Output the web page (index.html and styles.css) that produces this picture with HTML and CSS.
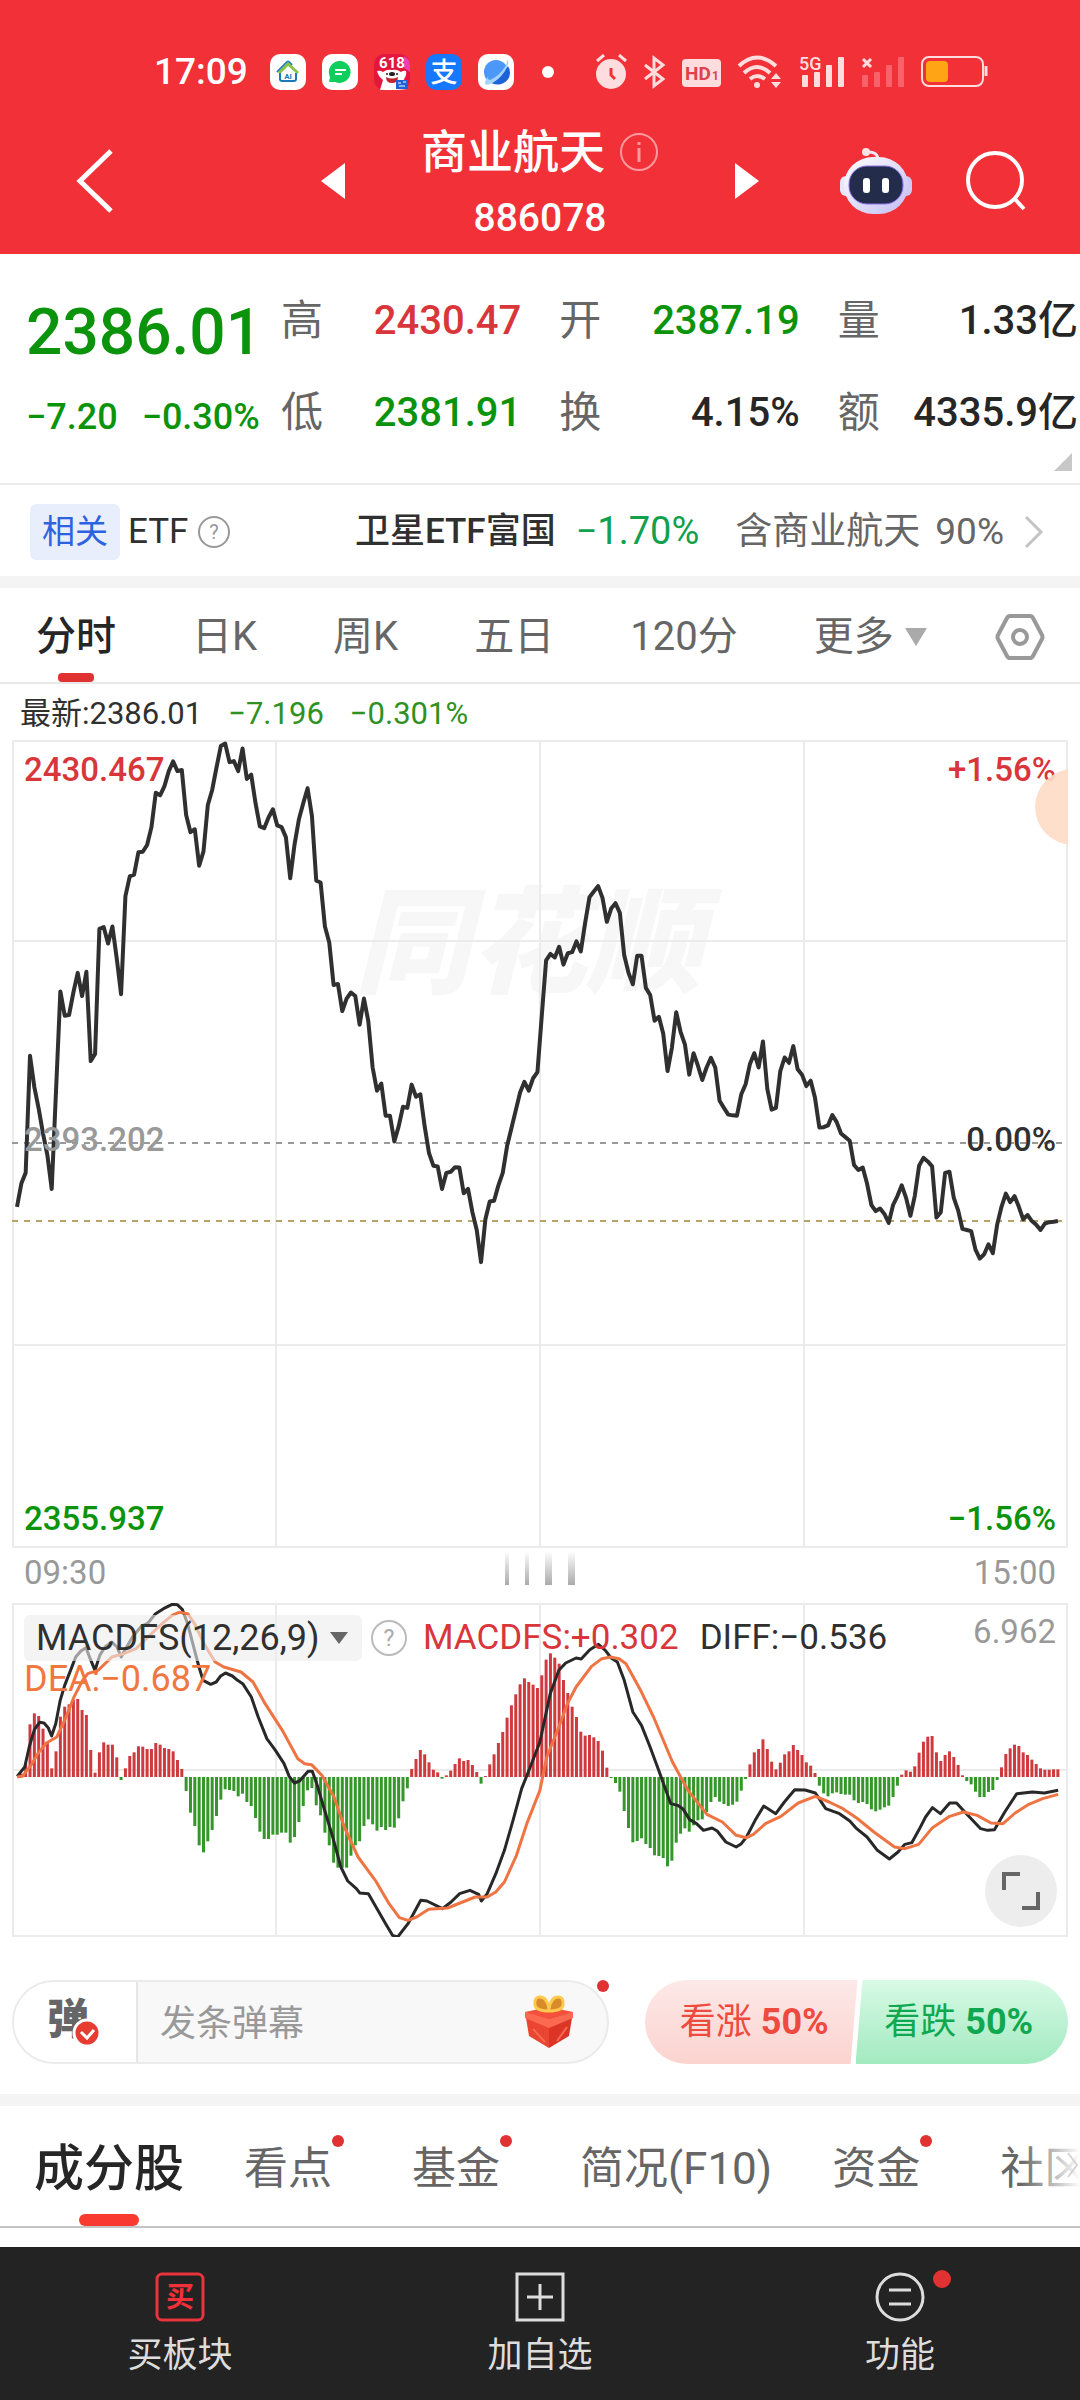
FILE: index.html
```html
<!DOCTYPE html>
<html lang="zh-CN">
<head>
  <meta charset="UTF-8" />
  <meta name="viewport" content="width=device-width, initial-scale=1.0" />
  <title>商业航天 886078</title>
  <link rel="stylesheet" href="styles.css">
</head>
<body>
  <header class="header">
    <div class="status">
      <span class="clock">17:09</span>
      <div class="status-apps">
        <svg width="36" height="36" viewBox="0 0 36 36">
          <rect width="36" height="36" rx="10" fill="#fff"/>
          <path d="M7 18L17 8q1-1 2 0l3 3" fill="none" stroke="#2a7fc0" stroke-width="2"/>
          <path d="M9 19L18 10l10 9" fill="none" stroke="#8bc34a" stroke-width="3"/>
          <path d="M10 19v6q0 2 2 2h12q2 0 2-2v-6" fill="none" stroke="#1a7ab8" stroke-width="2"/>
          <text x="18" y="25" font-size="8" font-weight="700" fill="#1a7ab8" text-anchor="middle">AI</text>
        </svg>
        <svg width="36" height="36" viewBox="0 0 36 36">
          <rect width="36" height="36" rx="10" fill="#fff"/>
          <path d="M18 7a11 11 0 1 1-5 21H7l1-5A11 11 0 0 1 18 7z" fill="#0fce5e"/>
          <path d="M13 16h11M13 20h7" stroke="#fff" stroke-width="2"/>
        </svg>
        <svg width="36" height="36" viewBox="0 0 36 36">
          <rect width="36" height="36" rx="10" fill="#e3173c"/>
          <path d="M30 2q6 3 6 9v7l-6-4z" fill="#f13cb0"/>
          <path d="M3 17q3-1 6 1q4-3 9-2q5-1 9 2q3-2 5-1q1 4-2 8l3 10q-6 1-12 1H6l3-10q-5-4-6-9z" fill="#fff"/>
          <path d="M12 23q6 3 12 0q0 6-6 6t-6-6z" fill="#c0272d"/>
          <circle cx="13" cy="20" r="1" fill="#222"/><circle cx="23" cy="20" r="1" fill="#222"/>
          <ellipse cx="18" cy="20" rx="3" ry="2" fill="#222"/>
          <text x="18" y="14" font-size="15" font-weight="700" fill="#fff" text-anchor="middle">618</text>
          <rect x="22" y="26" width="12" height="9" fill="#1f62d8"/>
          <path d="M24 29h3M29 28h3M25 32h6" stroke="#fff" stroke-width="1"/>
        </svg>
        <svg width="36" height="36" viewBox="0 0 36 36">
          <rect width="36" height="36" rx="10" fill="#1677ff"/>
          <text x="18" y="28" font-size="27" font-weight="500" fill="#fff" text-anchor="middle">支</text>
        </svg>
        <svg width="36" height="36" viewBox="0 0 36 36">
          <rect width="36" height="36" rx="10" fill="#fff"/>
          <circle cx="18" cy="18" r="12" fill="#4b98f8"/>
          <path d="M30 12a12 12 0 0 1-16 17q10-5 16-17z" fill="#1d62d6"/>
          <path d="M29 6q3 1 0 7q-5 10-13 15q-7 4-9 2q-1-2 3-7q0 3 2 3q9-4 15-13q2-3 2-7z" fill="#a4d4fd"/>
        </svg>
      </div>
      <span class="status-dot"></span>
      <div class="status-icons">
        <svg width="31" height="36" viewBox="0 0 31 36" fill="#ffdcdd">
          <circle cx="15" cy="20" r="15"/>
          <path d="M1 7l7-6M30 7l-7-6" stroke="#ffdcdd" stroke-width="3"/>
          <path d="M15 14v7l4 4" fill="none" stroke="#f23038" stroke-width="3"/>
        </svg>
        <svg width="23" height="36" viewBox="0 0 23 36" fill="none" stroke="#ffdcdd" stroke-width="3">
          <path d="M2 11l18 14-9 7V4l9 7L2 25"/>
        </svg>
        <svg width="39" height="36" viewBox="0 0 39 36">
          <rect y="5" width="39" height="28" rx="4" fill="#ffdcdd"/>
          <text x="3" y="26" font-size="19" font-weight="700" fill="#e0424a">HD</text>
          <text x="30" y="26" font-size="12" font-weight="700" fill="#e0424a">1</text>
        </svg>
        <svg width="45" height="36" viewBox="0 0 45 36" fill="none" stroke="#ffdcdd" stroke-width="4">
          <path d="M2 12q18-17 37 0M7 19q13-12 26 0M13 25q7-6 15 0"/>
          <circle cx="20" cy="31" r="3" fill="#ffdcdd" stroke="none"/>
          <path d="M34 25l5-6 5 6zM34 28l5 6 5-6z" fill="#ffdcdd" stroke="none"/>
        </svg>
        <svg width="47" height="36" viewBox="0 0 47 36" fill="#ffdcdd">
          <text x="1" y="16" font-size="18" font-weight="500">5G</text>
          <rect x="4" y="21" width="6" height="12" rx="1"/><rect x="16" y="18" width="6" height="15" rx="1"/>
          <rect x="28" y="11" width="6" height="22" rx="1"/><rect x="40" y="3" width="6" height="30" rx="1"/>
        </svg>
        <svg width="44" height="36" viewBox="0 0 44 36" fill="#f8626a">
          <path d="M2 5l8 8M10 5l-8 8" stroke="#ffdcdd" stroke-width="3"/>
          <rect x="1" y="21" width="6" height="12" rx="1"/><rect x="13" y="18" width="6" height="15" rx="1"/>
          <rect x="25" y="11" width="6" height="22" rx="1"/><rect x="37" y="3" width="6" height="30" rx="1"/>
        </svg>
        <svg width="67" height="36" viewBox="0 0 67 36">
          <rect x="1" y="3" width="61" height="29" rx="7" fill="none" stroke="#ffdcdd" stroke-width="2"/>
          <rect x="5" y="7" width="22" height="21" rx="4" fill="#ffa415"/>
          <path d="M65 12v10" stroke="#ffdcdd" stroke-width="3"/>
        </svg>
      </div>
    </div>

    <nav class="topbar">
      <button class="icon-btn back" aria-label="返回">
        <svg width="38" height="64" viewBox="0 0 38 64"><path d="M35 2L4 32l31 30" fill="none" stroke="#fff" stroke-width="5"/></svg>
      </button>
      <div class="switcher">
        <button class="icon-btn" aria-label="上一个">
          <svg width="24" height="36" viewBox="0 0 24 36"><path d="M24 0v36L0 18z" fill="#fff"/></svg>
        </button>
        <div class="title">
          <div class="title-line">
            <h1>商业航天</h1>
            <svg width="40" height="40" viewBox="0 0 40 40" fill="none" stroke="#fa9a9e" stroke-width="2">
              <circle cx="20" cy="20" r="18"/><path d="M20 16v14" stroke-width="3"/><path d="M20 10v3" stroke-width="3"/>
            </svg>
          </div>
          <p class="code">886078</p>
        </div>
        <button class="icon-btn" aria-label="下一个">
          <svg width="24" height="36" viewBox="0 0 24 36"><path d="M0 0v36l24-18z" fill="#fff"/></svg>
        </button>
      </div>
      <div class="actions">
        <button class="icon-btn" aria-label="智能助手">
          <svg width="72" height="68" viewBox="0 0 72 68">
            <defs>
              <linearGradient id="shell" x1="0" y1="0" x2="1" y2="1">
                <stop offset="0" stop-color="#fff"/><stop offset="1" stop-color="#c3bdf3"/>
              </linearGradient>
            </defs>
            <path d="M26 5q12-1 12 8" fill="none" stroke="#f3e6f2" stroke-width="3"/>
            <circle cx="26" cy="5" r="4" fill="#fbe3e8"/>
            <rect x="0" y="29" width="12" height="20" rx="6" fill="#e8e6f8"/>
            <rect x="60" y="29" width="12" height="20" rx="6" fill="#cfc9f5"/>
            <rect x="4" y="10" width="64" height="57" rx="29" fill="url(#shell)"/>
            <rect x="9" y="19" width="54" height="38" rx="18" fill="#232c4b" stroke="#8a74e8" stroke-width="1"/>
            <rect x="23" y="31" width="7" height="15" rx="3" fill="#fff"/>
            <rect x="42" y="31" width="7" height="15" rx="3" fill="#fff"/>
          </svg>
        </button>
        <button class="icon-btn" aria-label="搜索">
          <svg width="60" height="60" viewBox="0 0 60 60" fill="none" stroke="#fff" stroke-width="4">
            <circle cx="29" cy="29" r="27"/><path d="M48 47l10 11"/>
          </svg>
        </button>
      </div>
    </nav>
  </header>

  <section class="quote">
    <div class="price down">
      <p class="price-now">2386.01</p>
      <p class="price-change"><span>−7.20</span><span>−0.30%</span></p>
    </div>
    <dl class="stats">
      <div><dt>高</dt><dd class="up">2430.47</dd></div>
      <div><dt>开</dt><dd class="down">2387.19</dd></div>
      <div><dt>量</dt><dd>1.33亿</dd></div>
      <div><dt>低</dt><dd class="down">2381.91</dd></div>
      <div><dt>换</dt><dd>4.15%</dd></div>
      <div><dt>额</dt><dd>4335.9亿</dd></div>
    </dl>
    <span class="expand"></span>
  </section>

  <a class="etf" href="#">
    <span class="tag">相关</span>
    <span>ETF</span>
    <svg class="help" width="32" height="32" viewBox="0 0 32 32">
      <circle cx="16" cy="16" r="15" fill="none" stroke="#999" stroke-width="2"/>
      <text x="16" y="23" font-size="20" fill="#999" text-anchor="middle">?</text>
    </svg>
    <span class="etf-name">卫星ETF富国</span>
    <span class="etf-rate">−1.70%</span>
    <span class="etf-note"><span>含商业航天</span><span>90%</span></span>
    <svg width="20" height="34" viewBox="0 0 20 34"><path d="M2 2l15 15L2 32" fill="none" stroke="#c4c4c4" stroke-width="3"/></svg>
  </a>

  <nav class="periods">
    <div class="period-list">
      <button class="active">分时</button>
      <button>日K</button>
      <button>周K</button>
      <button>五日</button>
      <button>120分</button>
      <button>更多<svg width="22" height="18" viewBox="0 0 22 18"><path d="M0 0h22L11 18z" fill="#aaa"/></svg></button>
    </div>
    <button class="settings" aria-label="设置">
      <svg width="50" height="46" viewBox="0 0 50 46" fill="none" stroke="#999" stroke-width="4">
        <path d="M15 2h20q2 0 3 2l9 17q1 2 0 4l-9 17q-1 2-3 2H15q-2 0-3-2L3 25q-1-2 0-4l9-17q1-2 3-2z"/>
        <circle cx="25" cy="23" r="7"/>
      </svg>
    </button>
  </nav>

  <p class="latest">最新:2386.01 <span>−7.196</span> <span>−0.301%</span></p>

  <main class="charts">
    <div class="chart chart-price">
      <span class="watermark">同花顺</span>
      <svg id="price" viewBox="0 0 1056 808" preserveAspectRatio="none"></svg>
      <span class="label top left up">2430.467</span>
      <span class="label top right up">+1.56%</span>
      <span class="label middle left muted">2393.202</span>
      <span class="label middle right">0.00%</span>
      <span class="label low left down">2355.937</span>
      <span class="label low right down">−1.56%</span>
      <span class="bubble"></span>
    </div>

    <div class="times">
      <span>09:30</span>
      <span class="grip"><i></i><i></i><i class="wide"></i><i class="wide"></i></span>
      <span>15:00</span>
    </div>

    <div class="chart chart-macd">
      <svg id="macd" viewBox="0 0 1056 334" preserveAspectRatio="none"></svg>
      <div class="legend">
        <label class="indicator">
          <select aria-label="指标"><option>MACDFS(12,26,9)</option></select>
          <svg width="18" height="12" viewBox="0 0 18 12"><path d="M0 0h18L9 12z" fill="#666"/></svg>
        </label>
        <svg class="help" width="36" height="36" viewBox="0 0 36 36">
          <circle cx="18" cy="18" r="17" fill="none" stroke="#bbb" stroke-width="2"/>
          <text x="18" y="26" font-size="23" fill="#aaa" text-anchor="middle">?</text>
        </svg>
        <span class="up">MACDFS:+0.302</span>
        <span>DIFF:−0.536</span>
        <span class="scale">6.962</span>
      </div>
      <p class="dea">DEA:−0.687</p>
      <button class="fullscreen" aria-label="全屏">
        <svg width="38" height="38" viewBox="0 0 38 38" fill="none" stroke="#666" stroke-width="4"><path d="M2 18V2h16M36 20v16H20"/></svg>
      </button>
    </div>
  </main>

  <section class="vote-row">
    <div class="danmu">
      <button class="danmu-switch" aria-label="弹幕开关">弹
        <svg width="30" height="30" viewBox="0 0 30 30">
          <circle cx="15" cy="15" r="13" fill="#e63c32" stroke="#fff" stroke-width="3"/>
          <path d="M9 14l6 6 7-8" fill="none" stroke="#fff" stroke-width="3"/>
        </svg>
      </button>
      <input type="text" placeholder="发条弹幕" aria-label="发条弹幕">
      <svg class="gift" width="50" height="54" viewBox="0 0 50 54">
        <path d="M1 17l24-5 24 5-24 9z" fill="#f5503c"/>
        <path d="M1 17l24 7v29L5 41z" fill="#ea4433"/>
        <path d="M49 17l-24 7v29l20-12z" fill="#dc3527"/>
        <path d="M1 17l24 7 24-7v6l-24 10L1 23z" fill="#fb6a50"/>
        <path d="M9 34l12 13M33 46l10-14" stroke="#f76a50" stroke-width="2"/>
        <path d="M25 14q-2-12-9-12q-6 0-5 8q1 6 14 6zM25 14q2-12 9-12q6 0 5 8q-1 6-14 6z" fill="#d98a2a" stroke="#ffc94d" stroke-width="3"/>
      </svg>
      <span class="dot"></span>
    </div>
    <div class="vote">
      <button class="vote-up">看涨 <b>50%</b></button>
      <button class="vote-down">看跌 <b>50%</b></button>
    </div>
  </section>

  <nav class="sections">
    <a class="active" href="#">成分股</a>
    <a class="has-dot" href="#">看点</a>
    <a class="has-dot" href="#">基金</a>
    <a href="#">简况(F10)</a>
    <a class="has-dot" href="#">资金</a>
    <a href="#">社区</a>
    <span class="fade"><svg width="14" height="40" viewBox="0 0 14 40"><path d="M2 8l9 12-9 12" fill="none" stroke="#d4d4d4" stroke-width="2"/></svg></span>
  </nav>

  <footer class="bottom">
    <button>
      <svg width="50" height="50" viewBox="0 0 50 50">
        <rect x="2" y="2" width="46" height="46" rx="5" fill="none" stroke="#e8343c" stroke-width="3"/>
        <text x="25" y="35" font-size="28" font-weight="700" fill="#f2303a" text-anchor="middle">买</text>
      </svg>
      买板块
    </button>
    <button>
      <svg width="50" height="50" viewBox="0 0 50 50" fill="none" stroke="#ddd" stroke-width="3">
        <rect x="2" y="2" width="46" height="46"/><path d="M25 12v26M12 25h26"/>
      </svg>
      加自选
    </button>
    <button>
      <span class="bottom-icon">
        <svg width="50" height="50" viewBox="0 0 50 50" fill="none" stroke="#ddd" stroke-width="3">
          <circle cx="25" cy="25" r="23"/><path d="M14 18h22M14 32h22"/>
        </svg>
        <span class="dot"></span>
      </span>
      功能
    </button>
  </footer>

  <script src="chart.js"></script>
</body>
</html>
```
FILE: styles.css
```css
body {
  margin: 0;
  min-height: 100vh;
  display: flex;
  flex-direction: column;
  overflow-x: hidden;
  background-color: #fff;
  font-family: Roboto, "Noto Sans CJK SC", sans-serif;
  line-height: 1.4;
  color: #303030;
}

h1,
p,
dl,
dd {
  margin: 0;
}

button {
  padding: 0;
  border: none;
  background: none;
  font-family: inherit;
  line-height: inherit;
  color: inherit;
  cursor: pointer;
}

a {
  color: inherit;
  text-decoration: none;
}

svg {
  display: block;
  flex-shrink: 0;
}

svg text {
  font-family: Roboto, "Noto Sans CJK SC", sans-serif;
}

.up {
  color: #d8363a;
}

.down {
  color: #0b930b;
}

.dot {
  position: absolute;
  width: 12px;
  height: 12px;
  border-radius: 50%;
  background-color: #e03232;
}

/* header */
.header {
  background-color: #f23038;
  color: #fff;
}

.status {
  display: flex;
  align-items: center;
  height: 36px;
  padding: 54px 24px 0 154px;
}

.clock {
  margin-right: 22px;
  font-size: 37px;
  font-weight: 500;
  line-height: 36px;
}

.status-apps,
.status-icons {
  display: flex;
  gap: 16px;
}

.status-dot {
  width: 12px;
  height: 12px;
  margin: 0 42px 0 28px;
  border-radius: 50%;
  background-color: #fff;
}

.topbar {
  display: grid;
  grid-template-columns: 1fr auto 1fr;
  align-items: center;
  height: 146px;
  padding: 18px 54px 0 76px;
}

.back {
  justify-self: start;
}

.switcher {
  display: flex;
  align-items: center;
  gap: 76px;
  margin-left: -22px;
}

.title {
  width: 238px;
}

.title-line {
  display: flex;
  align-items: center;
  gap: 14px;
}

.title h1 {
  font-size: 46px;
  font-weight: 500;
  line-height: 60px;
}

.title .code {
  margin-top: 14px;
  text-align: center;
  font-size: 39px;
  font-weight: 500;
  line-height: 44px;
}

.actions {
  display: flex;
  align-items: center;
  justify-content: flex-end;
  gap: 54px;
}

/* quote */
.quote {
  position: relative;
  display: grid;
  grid-template-columns: 229px 1fr;
  column-gap: 26px;
  height: 231px;
  padding: 0 2px 0 26px;
  box-sizing: border-box;
  border-bottom: 2px solid #ebebeb;
  font-weight: 500;
  white-space: nowrap;
}

.quote .price-now {
  padding-top: 37px;
  font-size: 64px;
  line-height: 84px;
}

.price-change {
  display: flex;
  gap: 24px;
  margin-top: 20px;
  font-size: 36px;
  line-height: 44px;
}

.quote .price,
.stats {
  min-width: 0;
}

.stats {
  display: grid;
  grid-template-columns: repeat(3, 1fr);
  grid-auto-rows: 60px;
  gap: 32px 38px;
  padding-top: 37px;
}

.stats div {
  display: flex;
  align-items: center;
  justify-content: space-between;
  min-width: 0;
}

.stats dt {
  font-size: 42px;
  font-weight: 400;
  color: #666;
}

.stats dd {
  font-size: 40px;
}

.stats dd:not([class]) {
  color: #262626;
}

.expand {
  position: absolute;
  right: 8px;
  bottom: 12px;
  width: 18px;
  height: 18px;
  background-color: #c8c8c8;
  clip-path: polygon(100% 0, 100% 100%, 0 100%);
}

/* related etf */
.etf {
  display: flex;
  align-items: center;
  height: 89px;
  padding: 2px 36px 0 30px;
  border-bottom: 12px solid #f4f4f4;
  font-size: 35px;
  white-space: nowrap;
}

.etf .tag {
  margin-right: 8px;
  padding: 0 12px;
  border-radius: 6px;
  background-color: #e8eefc;
  font-size: 33px;
  line-height: 56px;
  color: #2d62e0;
}

.etf .help {
  margin: 0 auto 0 10px;
}

.etf-name {
  font-weight: 500;
}

.etf-rate {
  margin: 0 36px 0 20px;
  font-size: 38px;
  color: #12a04e;
}

.etf-note {
  display: flex;
  gap: 15px;
  margin-right: 20px;
  font-size: 37px;
  color: #666;
}

/* chart periods */
.periods {
  display: flex;
  justify-content: space-between;
  height: 94px;
  padding: 0 35px 0 36px;
  border-bottom: 2px solid #e9e9e9;
}

.period-list {
  display: flex;
  gap: 76px;
}

.periods button {
  position: relative;
  display: flex;
  align-items: center;
  gap: 11px;
  padding-top: 3px;
  font-size: 40px;
  color: #666;
  white-space: nowrap;
}

.periods .active {
  font-weight: 500;
  color: #262626;
}

.periods .active::after,
.sections .active::after {
  content: "";
  position: absolute;
  left: 50%;
  bottom: 0;
  width: 36px;
  height: 9px;
  margin-left: -18px;
  border-radius: 4px;
  background-color: #e03230;
}

.latest {
  display: flex;
  gap: 26px;
  padding: 4px 20px 0;
  font-size: 31px;
  line-height: 52px;
}

.latest span {
  color: #2f9122;
}

/* charts */
.charts {
  padding: 0 12px;
}

.chart {
  position: relative;
}

.chart > svg {
  position: relative;
  width: 100%;
}

.chart-price > svg {
  height: 808px;
}

.chart-macd > svg {
  height: 334px;
}

.label {
  position: absolute;
  font-size: 33px;
  font-weight: 500;
  line-height: 40px;
}

.label.left {
  left: 12px;
}

.label.right {
  right: 12px;
}

.label.top {
  top: 10px;
}

.label.middle {
  top: 380px;
}

.label.low {
  bottom: 9px;
}

.label.muted {
  color: #999;
}

.watermark {
  position: absolute;
  top: 134px;
  left: 50%;
  margin-left: -186px;
  font-size: 116px;
  font-style: italic;
  font-weight: 900;
  line-height: 140px;
  color: #f7f7f7;
}

.bubble {
  position: absolute;
  top: 29px;
  right: 0;
  width: 33px;
  height: 76px;
  background-color: rgba(253, 220, 198, 0.9);
  clip-path: circle(38px at 38px 38px);
}

.times {
  display: flex;
  align-items: center;
  justify-content: space-between;
  height: 51px;
  padding: 0 12px 4px;
  font-size: 33px;
  color: #999;
}

.grip {
  display: flex;
  align-self: flex-start;
  gap: 16px;
  padding-top: 3px;
}

.grip i {
  width: 4px;
  height: 34px;
  background: linear-gradient(#fff, #aaa);
}

.grip .wide {
  width: 7px;
}

.legend {
  position: absolute;
  top: 12px;
  left: 12px;
  right: 12px;
  display: flex;
  align-items: center;
  font-size: 35px;
  line-height: 46px;
  white-space: nowrap;
}

.indicator {
  display: flex;
  align-items: center;
  padding: 0 14px 0 12px;
  border-radius: 6px;
  background-color: rgba(236, 236, 236, 0.6);
  font-size: 36px;
}

.indicator select {
  appearance: none;
  margin: 0 10px 0 0;
  padding: 0;
  border: none;
  background: none;
  font: inherit;
  color: #303030;
}

.legend .help {
  margin: 0 16px 0 9px;
}

.legend .up {
  margin-right: 21px;
}

.legend .scale {
  margin: -12px 0 0 auto;
  font-size: 33px;
  color: #999;
}

.dea {
  position: absolute;
  top: 55px;
  left: 12px;
  font-size: 36px;
  line-height: 42px;
  color: #f07840;
}

.fullscreen {
  position: absolute;
  right: 11px;
  bottom: 10px;
  display: flex;
  align-items: center;
  justify-content: center;
  width: 72px;
  height: 72px;
  border-radius: 50%;
  background-color: #ededed;
}

/* danmu and vote */
.vote-row {
  display: flex;
  gap: 36px;
  padding: 43px 12px 30px;
  border-bottom: 12px solid #f4f4f4;
}

.danmu {
  position: relative;
  flex: 1;
  display: flex;
  align-items: center;
  min-width: 0;
  height: 84px;
  box-sizing: border-box;
  border: 2px solid #ebebeb;
  border-radius: 42px;
  background-color: #f8f8f8;
}

.danmu-switch {
  position: relative;
  flex-shrink: 0;
  width: 124px;
  height: 80px;
  padding: 0 14px 4px 0;
  border-right: 2px solid #e6e6e6;
  border-radius: 40px 0 0 40px;
  background-color: #fff;
  font-size: 42px;
  font-weight: 900;
  color: #666;
}

.danmu-switch svg {
  position: absolute;
  left: 58px;
  top: 36px;
}

.danmu input {
  flex: 1;
  min-width: 0;
  padding: 4px 22px 0;
  border: none;
  background: none;
  font-family: inherit;
  font-size: 36px;
  line-height: 50px;
}

.danmu input::placeholder {
  color: #999;
}

.gift {
  margin-right: 33px;
}

.danmu .dot {
  top: -2px;
  right: -2px;
}

.vote {
  flex-shrink: 0;
  display: flex;
  width: 423px;
}

.vote button {
  flex: 1;
  height: 84px;
  font-size: 36px;
  white-space: nowrap;
}

.vote-up {
  margin-right: -2px;
  border-radius: 42px 0 0 42px;
  background: linear-gradient(#fde9e8, #fbd3cf);
  clip-path: polygon(0 0, 100% 0, calc(100% - 7px) 100%, 0 100%);
}

.vote .vote-up {
  padding-left: 6px;
  color: #ee4a3e;
}

.vote-down {
  border-radius: 0 42px 42px 0;
  background: linear-gradient(#d8fae6, #a2eac0);
  clip-path: polygon(7px 0, 100% 0, 100% 100%, 0 100%);
}

.vote .vote-down {
  padding-right: 6px;
  color: #0fa850;
}

/* section tabs */
.sections {
  position: relative;
  display: flex;
  gap: 60px;
  height: 120px;
  padding-left: 34px;
  overflow: hidden;
  border-bottom: 2px solid #c4c4c4;
  font-size: 44px;
  line-height: 126px;
  color: #666;
  white-space: nowrap;
}

.sections a {
  position: relative;
}

.sections .active {
  height: 120px;
  font-size: 50px;
  font-weight: 500;
  color: #262626;
}

.sections .active::after {
  width: 60px;
  height: 12px;
  margin-left: -30px;
  border-radius: 6px;
  background-color: #f83a30;
}

.sections .has-dot {
  padding-right: 20px;
}

.has-dot::after {
  content: "";
  position: absolute;
  top: 29px;
  right: 8px;
  width: 12px;
  height: 12px;
  border-radius: 50%;
  background-color: #e03232;
}

.fade {
  position: absolute;
  top: 0;
  right: 0;
  display: flex;
  align-items: center;
  justify-content: flex-end;
  width: 60px;
  height: 118px;
  background: linear-gradient(to right, rgba(255, 255, 255, 0), #fff);
}

/* bottom bar */
.bottom {
  display: grid;
  grid-template-columns: repeat(3, 1fr);
  height: 153px;
  margin-top: auto;
  background-color: #232323;
}

.bottom button {
  display: flex;
  flex-direction: column;
  align-items: center;
  gap: 14px;
  padding-top: 25px;
  font-size: 35px;
  line-height: 40px;
  color: #ddd;
}

.bottom-icon {
  position: relative;
}

.bottom-icon .dot {
  top: -2px;
  right: -26px;
  width: 18px;
  height: 18px;
}
```
FILE: chart.js
```js
// one value per trading minute, counted down from the top of the chart
const PRICE = [
  1307, 1242, 1212, 884, 972, 1032, 1102, 1162, 1257, 982, 704, 772, 770, 707, 652, 717, 649, 899, 879, 529,
  524, 570, 522, 612, 712, 437, 382, 377, 314, 313, 294, 244, 148, 155, 129, 87, 60, 87, 84, 210,
  258, 250, 352, 312, 182, 140, 77, 17, 10, 62, 59, 87, 24, 109, 97, 177, 242, 247, 217, 194,
  239, 244, 272, 387, 292, 222, 177, 135, 212, 394, 399, 522, 567, 686, 683, 759, 724, 707, 717, 797,
  724, 787, 917, 982, 962, 1052, 1052, 1124, 1082, 1027, 1030, 965, 999, 992, 1082, 1157, 1192, 1194, 1257, 1212,
  1209, 1196, 1197, 1269, 1257, 1322, 1372, 1462, 1342, 1292, 1290, 1247, 1212, 1137, 1087, 1037, 987, 957, 982, 947,
  930, 772, 617, 599, 609, 579, 629, 597, 594, 564, 592, 512, 440, 424, 409, 442, 509, 472, 457, 484,
  602, 652, 684, 604, 604, 694, 714, 786, 775, 822, 927, 862, 762, 817, 852, 937, 877, 912, 952, 917,
  890, 917, 1010, 1030, 1049, 1051, 1052, 992, 964, 907, 877, 917, 844, 977, 1035, 1030, 927, 889, 904, 857,
  922, 937, 969, 954, 1002, 1085, 1084, 1079, 1050, 1070, 1102, 1112, 1122, 1190, 1204, 1197, 1242, 1302, 1319, 1312,
  1327, 1352, 1302, 1277, 1247, 1282, 1332, 1277, 1192, 1170, 1180, 1194, 1337, 1322, 1212, 1209, 1282, 1317, 1369, 1372,
  1375, 1427, 1452, 1440, 1412, 1437, 1357, 1307, 1270, 1294, 1277, 1307, 1342, 1330, 1347, 1357, 1372, 1354, 1350, 1349,
  1347
];

const BARS = [
  0, 10, 40, 158, 191, 183, 145, 106, 26, 77, 181, 211, 218, 231, 234, 201, 186, 81, 13, 74,
  104, 97, 97, 59, -9, 26, 63, 74, 92, 91, 84, 84, 102, 97, 87, 84, 77, 51, 24, -42,
  -107, -147, -205, -226, -193, -159, -117, -68, -37, -39, -42, -58, -50, -75, -87, -123, -164, -186, -186, -173,
  -173, -167, -167, -197, -180, -135, -87, -40, -33, -85, -115, -167, -205, -257, -272, -272, -272, -236, -205, -193,
  -147, -127, -142, -161, -150, -159, -150, -152, -124, -73, -34, 24, 54, 81, 68, 44, 22, 14, -5, 5,
  19, 39, 56, 48, 51, 36, 15, -20, 3, 38, 68, 102, 135, 178, 215, 248, 278, 296, 285, 277,
  267, 305, 352, 371, 358, 340, 291, 252, 211, 180, 136, 124, 126, 119, 108, 79, 28, -3, -18, -44,
  -102, -153, -196, -192, -184, -201, -213, -235, -237, -243, -268, -251, -197, -170, -154, -164, -145, -130, -127, -105,
  -75, -60, -74, -81, -87, -83, -74, -41, -6, 38, 74, 84, 113, 84, 46, 23, 43, 68, 77, 96,
  81, 66, 44, 34, 12, -26, -49, -58, -49, -46, -51, -53, -53, -70, -78, -75, -81, -97, -103, -98,
  -91, -86, -60, -26, 7, 20, 16, 32, 73, 106, 121, 123, 74, 48, 66, 77, 60, 36, 5, -12,
  -22, -44, -60, -60, -45, -39, -9, 29, 69, 86, 97, 93, 74, 66, 52, 39, 26, 22, 22, 23,
  23
];

// x,y pairs, morning and afternoon session
const DIFF_AM = '50,558 72,530 85,470 100,418 115,396 128,398 140,412 150,437 162,400 175,330 188,285 205,240 220,200 235,182 250,172 262,205 276,240 290,195 305,170 325,155 340,170 352,200 365,175 385,140 410,108 430,98 452,70 475,55 500,42 515,43 530,58 545,100 560,160 578,230 590,270 612,282 628,275 640,258 655,248 675,257 690,270 705,280 730,320 750,380 775,445 800,480 825,520 840,558 855,578 870,572 895,543 907,543 920,580 940,650 965,735 990,830 1010,872 1035,895 1045,908 1070,910 1095,955 1120,1000 1140,1035 1155,1040 1185,1000 1222,930 1240,932 1285,955 1310,935 1335,910 1365,900 1390,912 1398,932 1415,910 1440,850 1465,780 1490,690 1515,595 1540,530 1568,455';
const DIFF_PM = '30,310 55,240 75,218 105,203 120,206 145,178 170,162 190,180 207,203 225,215 245,270 270,365 295,405 320,470 345,540 380,640 400,645 415,655 435,688 455,700 475,720 500,713 515,722 540,755 570,770 585,760 600,740 625,690 650,647 685,670 710,635 740,598 770,599 800,608 830,655 870,670 900,692 920,715 950,740 980,780 1015,806 1040,785 1060,762 1080,757 1100,720 1120,680 1140,652 1163,670 1190,638 1210,638 1240,672 1280,715 1300,720 1320,718 1350,665 1385,610 1430,605 1465,608 1505,600';
const DEA_AM = '50,560 65,558 90,525 110,490 135,458 165,440 190,385 215,320 240,270 255,250 285,240 325,200 360,190 395,175 430,140 465,105 500,75 520,66 545,70 565,100 595,165 625,215 650,230 700,245 735,275 770,340 820,420 865,505 885,520 905,523 935,555 970,620 1000,710 1040,800 1090,870 1130,940 1160,982 1185,990 1210,980 1245,957 1300,953 1380,920 1415,920 1440,905 1465,875 1500,795 1530,700 1568,600';
const DEA_PM = '20,500 55,410 80,340 105,290 150,228 180,205 205,200 230,205 250,220 290,295 330,380 385,515 430,600 485,672 530,695 570,735 600,742 620,732 655,700 700,678 750,638 800,618 840,635 880,655 920,683 970,725 1030,770 1060,775 1100,762 1140,712 1190,678 1230,665 1270,675 1310,698 1345,700 1380,668 1420,642 1460,625 1505,612';

const WIDTH = 1056;
const START = 5;
const STEP = 4.337;

function el(svg, tag, attrs) {
  const node = document.createElementNS('http://www.w3.org/2000/svg', tag);
  for (const key in attrs) node.setAttribute(key, attrs[key]);
  svg.appendChild(node);
}

function line(svg, x1, y1, x2, y2, stroke, dash) {
  el(svg, 'line', { x1, y1, x2, y2, stroke, 'stroke-width': 2, 'stroke-dasharray': dash || 'none' });
}

function curve(svg, points, stroke, width) {
  el(svg, 'polyline', { points, stroke, 'stroke-width': width, fill: 'none', 'stroke-linejoin': 'round' });
}

function grid(svg, height, rows) {
  el(svg, 'rect', { x: 1, y: 1, width: WIDTH - 2, height: height - 2, fill: 'none', stroke: '#ebebeb', 'stroke-width': 2 });
  for (let i = 1; i < 4; i++) line(svg, WIDTH * i / 4, 0, WIDTH * i / 4, height, '#ebebeb');
  rows.forEach(y => line(svg, 0, y, WIDTH, y, '#ebebeb'));
}

const session = (text, shift) => text.split(' ').map(pair => {
  const [x, y] = pair.split(',').map(Number);
  return `${(x + shift - 35) / 2.904},${(y - 38) / 3}`;
}).join(' ');

const price = document.getElementById('price');
grid(price, 808, [201, 605]);
line(price, 0, 403, WIDTH - 6, 403, '#999', '6 6');
line(price, 0, 481, WIDTH - 6, 481, '#b8a468', '6 6');
curve(price, PRICE.map((v, i) => `${START + i * STEP},${v / 2.8}`).join(' '), '#303030', 4);

const macd = document.getElementById('macd');
const ZERO = 174;
grid(macd, 334, [167]);
BARS.forEach((v, i) => {
  const h = Math.abs(v) / 3;
  el(macd, 'rect', { x: START + i * STEP - 1.5, y: v > 0 ? ZERO - h : ZERO, width: 3, height: h, fill: v > 0 ? '#cf3a3e' : '#35962a' });
});
curve(macd, session(DIFF_AM, 0) + ' ' + session(DIFF_PM, 1568), '#282828', 3);
curve(macd, session(DEA_AM, 0) + ' ' + session(DEA_PM, 1568), '#ee7543', 3);
```
